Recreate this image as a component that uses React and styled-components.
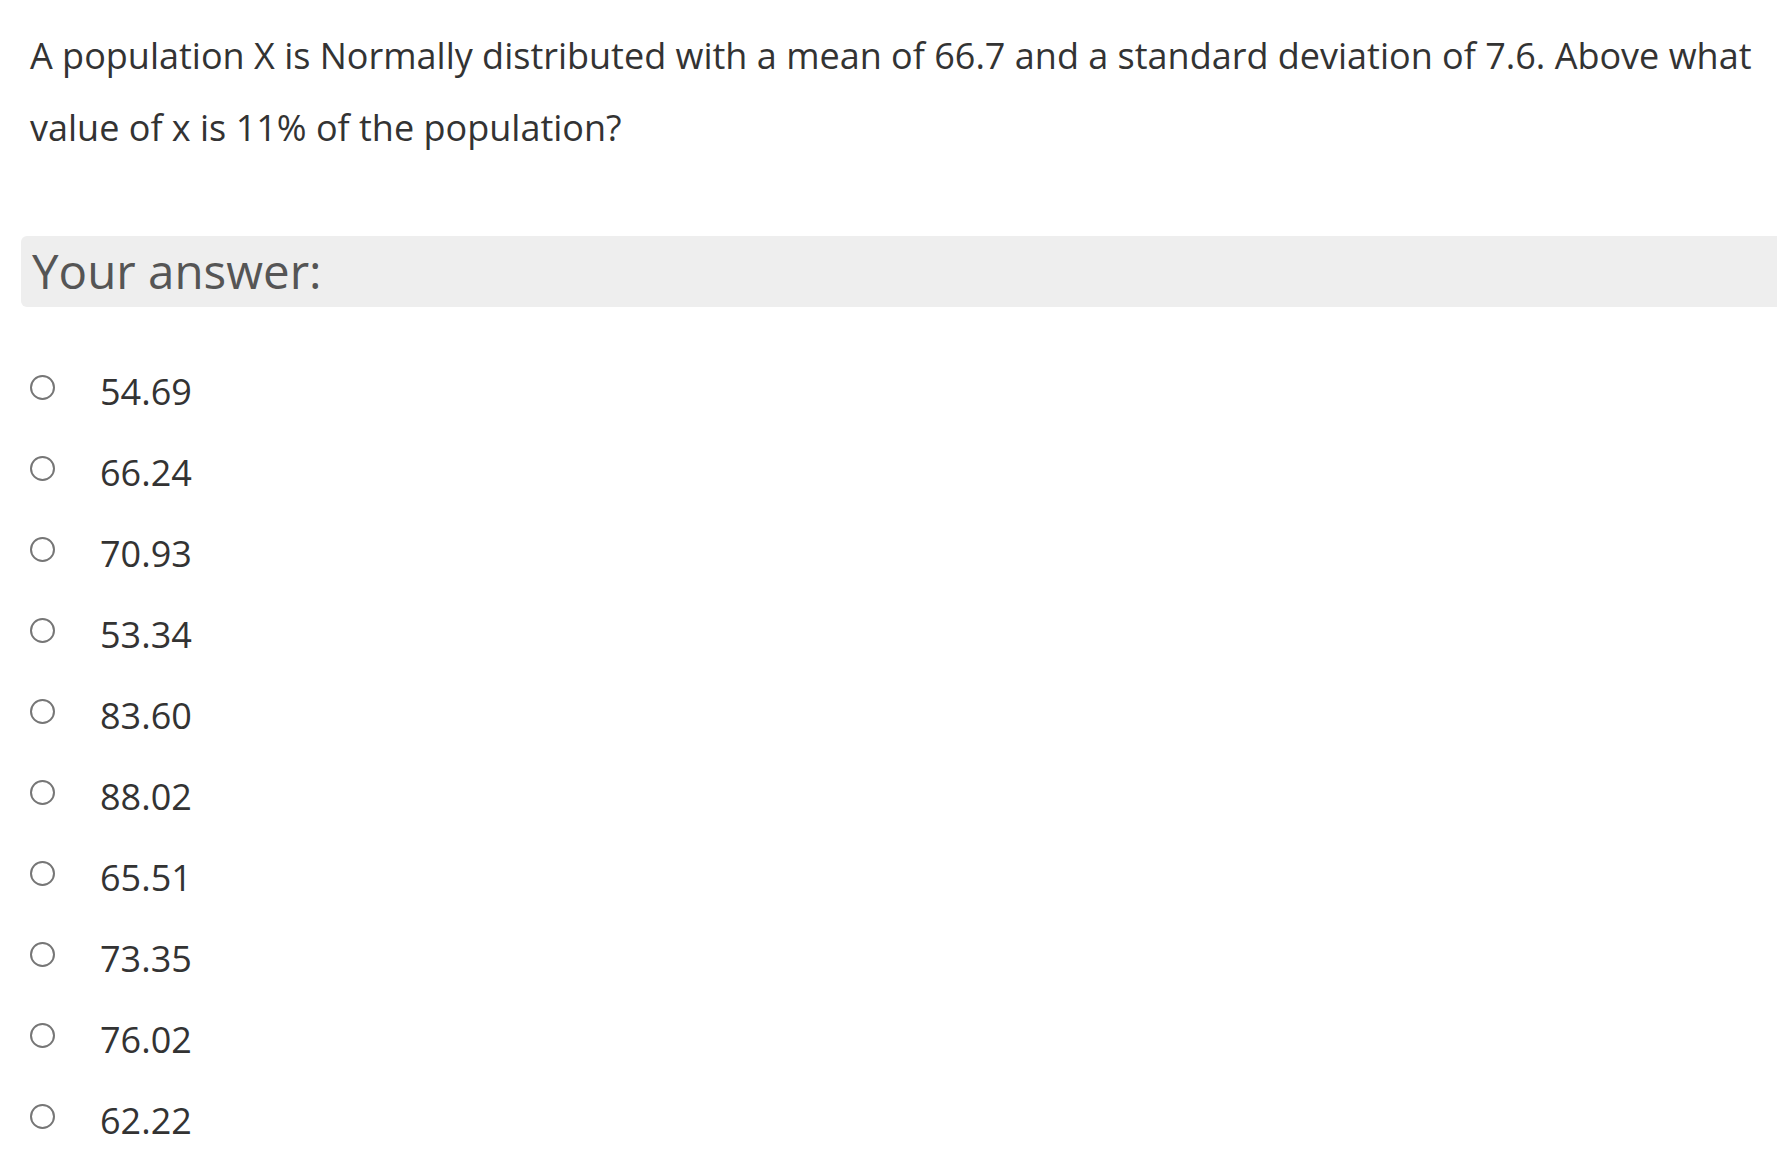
import React from 'react';
import styled, { createGlobalStyle } from 'styled-components';

const GlobalStyle = createGlobalStyle`
  html, body {
    margin: 0;
    padding: 0;
    background: #ffffff;
    overflow: hidden;
  }
  body {
    font-family: "Open Sans", "Liberation Sans", sans-serif;
  }
`;

const Page = styled.div`
  padding: 20px 0 0 21px;
  width: calc(100vw - 21px);
`;

const Question = styled.p`
  margin: 0 0 0 9px;
  font-size: 36px;
  line-height: 72px;
  color: #333333;
`;

const AnswerBar = styled.div`
  margin: 72px -20px 0 0;
  height: 71px;
  padding-left: 11px;
  background: #eeeeee;
  border-radius: 6px 0 0 6px;
  font-size: 47.5px;
  line-height: 70px;
  color: #555555;
`;

const Options = styled.div`
  margin-top: 44px;
  padding-left: 9px;
  display: flex;
  flex-direction: column;
`;

const OptionRow = styled.label`
  height: 81px;
  display: flex;
  align-items: flex-start;
  gap: 45px;
  cursor: pointer;
`;

const Radio = styled.input`
  appearance: none;
  margin: 24px 0 0 0;
  width: 25px;
  height: 25px;
  border: 2px solid #767676;
  border-radius: 50%;
  box-sizing: border-box;
  flex-shrink: 0;
  background: #fff;
`;

const OptionText = styled.span`
  font-size: 36px;
  line-height: 81px;
  color: #333333;
`;

const answers = ['54.69', '66.24', '70.93', '53.34', '83.60', '88.02', '65.51', '73.35', '76.02', '62.22'];

const App = () => {
  return (
    <Page>
      <GlobalStyle />
      <Question>
        A population X is Normally distributed with a mean of 66.7 and a standard deviation of 7.6. Above what value of x is 11% of the population?
      </Question>
      <AnswerBar>Your answer:</AnswerBar>
      <Options>
        {answers.map((a) => (
          <OptionRow key={a}>
            <Radio type="radio" name="answer" value={a} />
            <OptionText>{a}</OptionText>
          </OptionRow>
        ))}
      </Options>
    </Page>
  );
};

export default App;
